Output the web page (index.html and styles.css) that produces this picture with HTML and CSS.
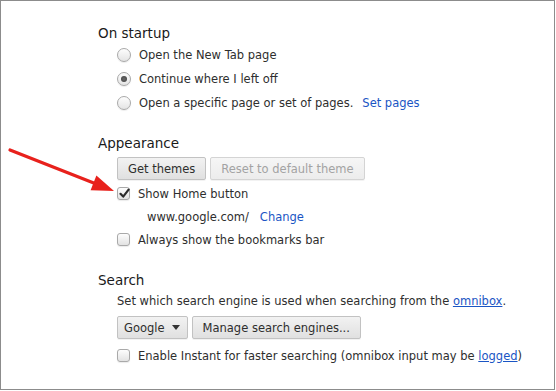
FILE: index.html
```html
<!DOCTYPE html>
<html lang="en">
<head>
    <meta charset="UTF-8">
    <title>Settings</title>
    <link rel="stylesheet" href="styles.css">
</head>
<body>
    <div class="frame">
        <section class="group startup">
            <h3>On startup</h3>
            <div class="options">
                <label class="row radio-row"><span class="radio"></span><span>Open the New Tab page</span></label>
                <label class="row radio-row"><span class="radio checked"></span><span>Continue where I left off</span></label>
                <label class="row radio-row"><span class="radio"></span><span>Open a specific page or set of pages.<a class="link set-pages" href="#">Set pages</a></span></label>
            </div>
        </section>

        <section class="group">
            <h3>Appearance</h3>
            <div class="options">
                <div class="buttons themes">
                    <button class="btn">Get themes</button>
                    <button class="btn" disabled>Reset to default theme</button>
                </div>
                <label class="row check-row"><span class="check checked">
                    <svg width="11" height="11" viewBox="0 0 11 11"><path d="M1.5 5.8 L4.2 8.6 L9.6 1.6" fill="none" stroke="#2b2b2b" stroke-width="2.2" stroke-linecap="round" stroke-linejoin="round"/></svg>
                </span><span>Show Home button</span></label>
                <div class="row home-url"><span>www.google.com/<a class="link change" href="#">Change</a></span></div>
                <label class="row check-row"><span class="check"></span><span>Always show the bookmarks bar</span></label>
            </div>
        </section>

        <section class="group">
            <h3>Search</h3>
            <div class="options">
                <div class="row text-row"><span>Set which search engine is used when searching from the <a class="link under" href="#">omnibox</a>.</span></div>
                <div class="buttons engines">
                    <button class="btn select">Google <span class="caret"></span></button>
                    <button class="btn">Manage search engines...</button>
                </div>
                <label class="row check-row"><span class="check"></span><span>Enable Instant for faster searching (omnibox input may be <a class="link under" href="#">logged</a>)</span></label>
            </div>
        </section>
    </div>

    <svg class="arrow" width="556" height="391" viewBox="0 0 556 391">
        <line x1="10" y1="150" x2="95" y2="183.5" stroke="#e8211c" stroke-width="3.2" stroke-linecap="round"/>
        <polygon points="114,191 90.6,190.3 96.4,175.5" fill="#e8211c"/>
    </svg>
</body>
</html>
```

FILE: styles.css
```css
body {
    margin: 0;
    background-color: #fff;
    font-family: 'DejaVu Sans', Verdana, sans-serif;
    font-size: 11.5px;
    color: #2e2e2e;
}
.frame {
    width: 555px;
    height: 390px;
    border: 1px solid #8c8c8c;
    padding: 22px 0 0 97px;
    box-sizing: border-box;
}
.group {
    margin-bottom: 19px;
}
.startup {
    margin-bottom: 18px;
}
h3 {
    margin: 0;
    font-size: 13.5px;
    line-height: 20px;
    font-weight: normal;
    color: #1a1a1a;
}
.options {
    padding-left: 19px;
}
.row {
    display: flex;
    align-items: center;
    white-space: nowrap;
}
.radio-row {
    height: 24px;
}
.check-row,
.home-url {
    height: 23px;
}
.text-row {
    height: 22px;
}
.home-url {
    padding-left: 30px;
}
.radio {
    width: 14px;
    height: 14px;
    border-radius: 50%;
    border: 1px solid #a9a9a9;
    box-sizing: border-box;
    background: linear-gradient(#fdfdfd, #e4e4e4);
    box-shadow: 0 1px 1px rgba(0, 0, 0, 0.08);
    margin-right: 8px;
    flex: none;
    display: flex;
    align-items: center;
    justify-content: center;
}
.radio.checked::after {
    content: '';
    width: 6px;
    height: 6px;
    border-radius: 50%;
    background: radial-gradient(#6a6a6a, #3d3d3d);
}
.check {
    width: 13px;
    height: 13px;
    border-radius: 3px;
    border: 1px solid #a9a9a9;
    box-sizing: border-box;
    background: linear-gradient(#fdfdfd, #e2e2e2);
    box-shadow: 0 1px 1px rgba(0, 0, 0, 0.08);
    margin-right: 8px;
    flex: none;
    position: relative;
}
.check svg {
    position: absolute;
    left: 1px;
    top: 0;
}
.link {
    color: #1a55c4;
    text-decoration: none;
}
.set-pages {
    margin-left: 9px;
}
.change {
    margin-left: 11px;
}
.under {
    text-decoration: underline;
}
.buttons {
    display: flex;
    gap: 4px;
    margin-top: 4px;
}
.themes {
    margin-bottom: 2px;
}
.engines {
    margin-bottom: 5px;
}
.btn {
    font-family: inherit;
    font-size: 11.5px;
    color: #2e2e2e;
    height: 23px;
    padding: 0 10px;
    border: 1px solid #c2c2c2;
    border-radius: 2px;
    background: linear-gradient(#f2f2f2, #e0e0e0);
    box-shadow: 0 1px 0 rgba(0, 0, 0, 0.05);
}
.btn:disabled {
    color: #a3a3a3;
    background: linear-gradient(#f6f6f6, #ececec);
    border-color: #d4d4d4;
}
.select {
    display: flex;
    align-items: center;
    padding: 0 7px 0 6px;
}
.caret {
    display: inline-block;
    margin-left: 7px;
    border-left: 4px solid transparent;
    border-right: 4px solid transparent;
    border-top: 5px solid #333;
}
.arrow {
    position: absolute;
    left: 0;
    top: 0;
    pointer-events: none;
}
```
